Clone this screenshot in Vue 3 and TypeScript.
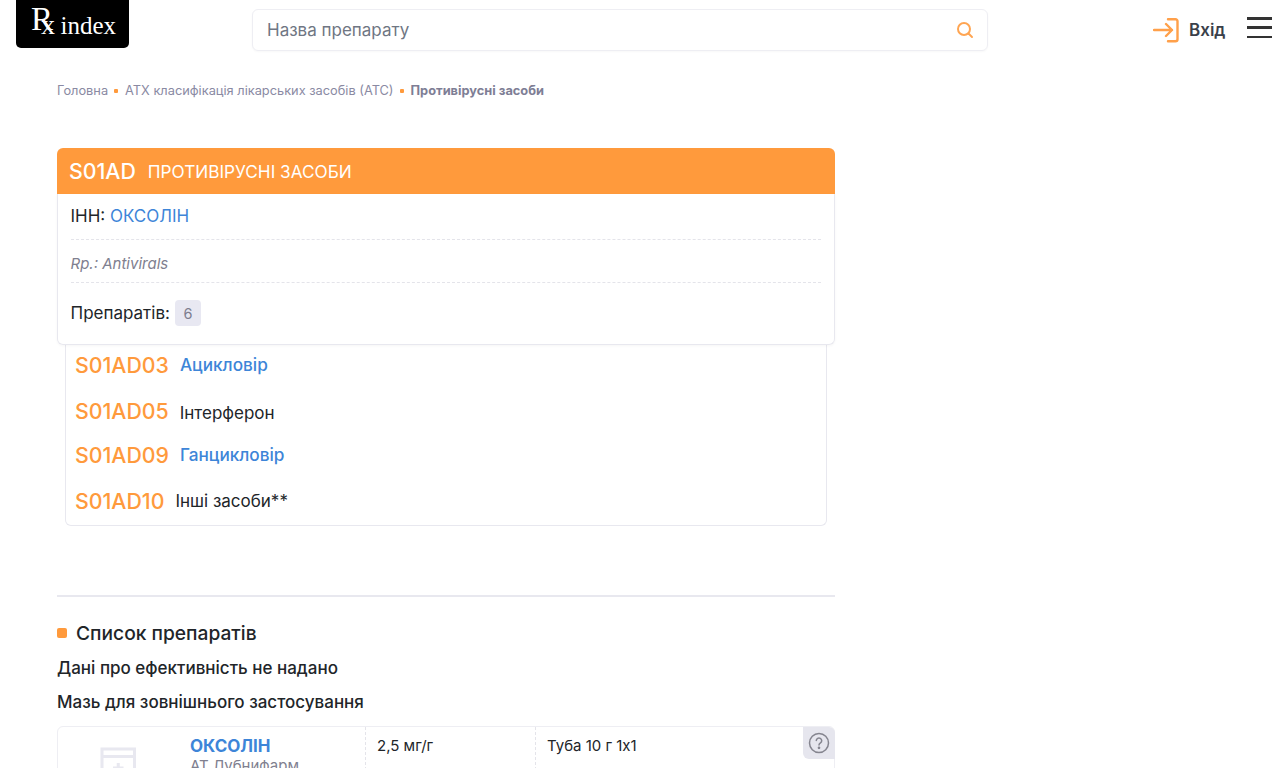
<script setup lang="ts">
interface Row { code: string; name: string; link: boolean; cls: string }
const rows: Row[] = [
  { code: 'S01AD03', name: 'Ацикловір', link: true, cls: 'r1' },
  { code: 'S01AD05', name: 'Інтерферон', link: false, cls: 'r2' },
  { code: 'S01AD09', name: 'Ганцикловір', link: true, cls: 'r3' },
  { code: 'S01AD10', name: 'Інші засоби**', link: false, cls: 'r4' },
]
</script>

<template>
  <div class="page">
    <header class="top">
      <div class="logo"><span class="rx">R</span><span class="x">x</span><span class="index">index</span></div>
      <div class="search">
        <span class="ph">Назва препарату</span>
        <svg width="18" height="18" viewBox="0 0 18 18" fill="none" stroke="#ffa552" stroke-width="2" stroke-linecap="round"><circle cx="8" cy="8" r="6"/><path d="M12.500 12.500 16 16"/></svg>
      </div>
      <div class="login">
        <svg width="27" height="27" viewBox="0 0 27 27" fill="none" stroke="#ffa04a" stroke-width="2.400" stroke-linecap="round" stroke-linejoin="round"><path d="M1 14h18M13 8l6 6-6 6"/><path d="M15 3.200h7.500a2 2 0 0 1 2 2v18a2 2 0 0 1-2 2h-7.500"/></svg>
        <span>Вхід</span>
      </div>
      <div class="burger"><i></i><i></i><i></i></div>
    </header>

    <main class="main">
      <nav class="crumbs">
        <span>Головна</span><b class="dot"></b><span>АТХ класифікація лікарських засобів (АТС)</span><b class="dot"></b><strong>Противірусні засоби</strong>
      </nav>

      <section class="card">
        <div class="head"><span class="hcode">S01AD</span><span class="htitle">ПРОТИВІРУСНІ ЗАСОБИ</span></div>
        <div class="body">
          <div class="line inn">ІНН: <a>ОКСОЛІН</a></div>
          <div class="line rp">Rp.: Antivirals</div>
          <div class="count">Препаратів: <span class="badge">6</span></div>
        </div>
      </section>

      <section class="sub">
        <div v-for="r in rows" :key="r.code" class="row" :class="r.cls">
          <span class="code">{{ r.code }}</span>
          <span class="name" :class="{ link: r.link }">{{ r.name }}</span>
        </div>
      </section>

      <hr class="divider" />

      <h2 class="title"><b></b>Список препаратів</h2>
      <p class="note n1">Дані про ефективність не надано</p>
      <p class="note n2">Мазь для зовнішнього застосування</p>

      <article class="drug">
        <div class="pic">
          <svg width="38" height="40" viewBox="0 0 38 40" fill="none" stroke="#e8e8f0" stroke-width="3"><path d="M2 2h32.500v36H2zM2 9.500h32.500"/><path d="M18.250 16v10M13 21h10.500"/></svg>
        </div>
        <div class="dname">
          <a>ОКСОЛІН</a>
          <span>АТ Лубнифарм</span>
        </div>
        <div class="cell c1">2,5 мг/г</div>
        <div class="cell c2">Туба 10 г 1х1</div>
        <div class="help">
          <svg width="22" height="22" viewBox="0 0 22 22" fill="none" stroke="#85858f" stroke-width="1.500"><circle cx="11" cy="11" r="9.500"/><path d="M8.300 8.600a2.700 2.700 0 1 1 4.200 2.300c-.9.600-1.500 1.100-1.500 2.100" stroke-linecap="round"/><circle cx="11" cy="15.800" r=".6" fill="#85858f"/></svg>
        </div>
      </article>
    </main>
  </div>
</template>

<style>
html, body { margin: 0; background: #fff; }
</style>

<style scoped>
.page { height: 768px; overflow: hidden; font-family: Inter, "Noto Sans", sans-serif; color: #212529; background: #fff; }
.top { display: flex; align-items: flex-start; height: 60px; padding-left: 16px; }
.logo { width: 113px; height: 48px; background: #000; border-radius: 0 0 5px 5px; color: #fff; font-family: "Liberation Serif", serif; box-sizing: border-box; padding: 0 0 0 15px; line-height: 38px; white-space: nowrap; }
.rx { font-size: 33px; }
.x { font-size: 28px; margin-left: -12px; position: relative; top: 4px; }
.index { font-size: 25px; margin-left: 5.500px; position: relative; top: 4px; }
.search { margin: 9px 0 0 123px; width: 736px; height: 42px; box-sizing: border-box; border: 1px solid #eeeef3; border-radius: 6px; display: flex; align-items: center; justify-content: space-between; padding: 0 13px 0 14px; box-shadow: 0 1px 2px rgba(0,0,0,.03); }
.ph { font-size: 17px; color: #6f7683; }
.login { margin: 16px 0 0 165px; display: flex; align-items: center; gap: 9px; font-size: 17px; font-weight: 600; color: #3a3f4a; }
.burger { margin: 17px 0 0 21.500px; width: 25.500px; display: flex; flex-direction: column; gap: 6.800px; }
.burger i { display: block; height: 2.500px; background: #333; }
.main { width: 778px; margin-left: 57px; }
.crumbs { display: flex; align-items: center; height: 18px; margin-top: 21px; font-size: 12.800px; color: #8a8aa3; }
.crumbs strong { font-weight: 700; color: #7e7e95; }
.dot { width: 4px; height: 4px; margin: 1px 7px 0 6px; background: #ff9a3c; border-radius: 1px; }
.card { margin-top: 49px; height: 196.500px; display: flex; flex-direction: column; }
.head { height: 46px; flex: none; background: #ff9a3c; color: #fff; display: flex; align-items: center; padding-left: 12px; gap: 12px; border-radius: 6px 6px 0 0; }
.hcode { font-size: 21.300px; font-weight: 500; }
.htitle { font-size: 17.200px; }
.body { flex: 1; border: 1px solid #e8e8ef; border-top: 0; border-radius: 0 0 6px 6px; box-shadow: 0 1px 3px rgba(0,0,0,.04); }
.line { margin: 0 13px 0 12.500px; border-bottom: 1px dashed #e4e4ea; }
.inn { height: 45px; line-height: 44px; font-size: 17px; }
.inn a, .link { color: #3d85d8; }
.rp { height: 42px; line-height: 47px; font-size: 15px; font-style: italic; color: #80808f; }
.count { margin-left: 12.500px; display: flex; align-items: center; gap: 5px; height: 60px; font-size: 17px; }
.badge { width: 26px; height: 26px; background: #e8e8f2; color: #7e7e8f; border-radius: 4px; font-size: 14.500px; display: flex; align-items: center; justify-content: center; }
.sub { margin: 0 8px; height: 181.500px; box-sizing: border-box; border: 1px solid #e8e8ef; border-top: 0; border-radius: 0 0 6px 6px; padding-left: 9px; }
.row { display: flex; align-items: baseline; gap: 11px; }
.code { font-size: 21.300px; font-weight: 500; color: #ff9a3c; }
.name { font-size: 17px; }
.name.link { font-weight: 500; font-size: 17.200px; }
.r1 .name.link { margin-bottom: 2px; }
.r1, .r3, .r4 { align-items: center; }
.r1 { padding-top: 7.500px; }
.r2 { padding-top: 20px; }
.r3 { padding-top: 17.500px; }
.r4 { padding-top: 20px; }
.divider { margin: 69px 0 0; border: 0; height: 2px; background: #e8e8ef; }
.title { margin: 25px 0 0; display: flex; align-items: center; gap: 9px; font-size: 19.200px; line-height: 22px; font-weight: 500; color: #212529; }
.title b { width: 10px; height: 10px; background: #ff9a3c; border-radius: 2px; }
.note { margin: 0; font-size: 17px; font-weight: 500; line-height: 20px; }
.n1 { margin-top: 14px; }
.n2 { margin-top: 14px; }
.drug { margin-top: 14px; height: 120px; box-sizing: border-box; border: 1px solid #eeeef3; border-radius: 6px; display: flex; position: relative; }
.pic { width: 132px; padding: 20px 0 0 42px; box-sizing: border-box; }
.dname { width: 175px; display: flex; flex-direction: column; padding-top: 8px; }
.dname a { font-size: 17px; font-weight: 700; color: #3d85d8; line-height: 22px; }
.dname span { font-size: 15px; color: #80808f; line-height: 18px; }
.cell { width: 170px; box-sizing: border-box; border-left: 1px dashed #e4e4ea; padding: 10px 0 0 11px; font-size: 15px; line-height: 18px; }
.help { position: absolute; top: 0; right: -1px; width: 32px; height: 32px; background: #e6e6ee; border-radius: 0 6px 0 6px; display: flex; align-items: center; justify-content: center; }
</style>
